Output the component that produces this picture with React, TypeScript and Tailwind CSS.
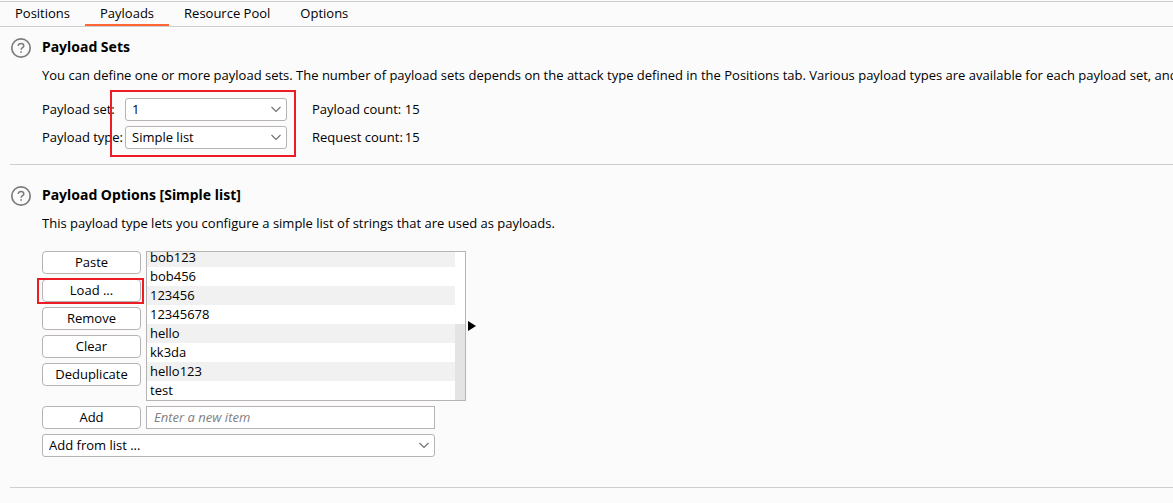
import type { ReactNode, SelectHTMLAttributes } from "react";

const tabs = ["Positions", "Payloads", "Resource Pool", "Options"];
const items = ["bob123", "bob456", "123456", "12345678", "hello", "kk3da", "hello123", "test"];

function HelpIcon() {
  return (
    <svg className="block" width="22" height="22" viewBox="0 0 22 22" fill="none" stroke="#7c7c7c" aria-hidden="true">
      <circle cx="11" cy="11" r="9.2" strokeWidth="1.7" />
      <path d="M8.3 9.1C8.3 7.4 9.4 6.5 11 6.5s2.8.9 2.8 2.4c0 1.7-2.7 1.9-2.7 3.9" strokeWidth="1.5" />
      <path d="M11.1 14.2v1.6" strokeWidth="1.7" />
    </svg>
  );
}

function Section({ title, text, children }: { title: string; text: string; children: ReactNode }) {
  return (
    <section className="ml-[10px] flex border-b border-[#cfcfcf]">
      <button type="button" aria-label={"Help: " + title} className="h-[22px] w-8 shrink-0">
        <HelpIcon />
      </button>
      <div className="min-w-0 flex-1">
        <h2 className="font-['Noto_Sans','Noto_Sans_CJK_SC',sans-serif] text-[14px] leading-5 font-bold whitespace-nowrap">
          {title}
        </h2>
        <p className="mt-2 overflow-hidden leading-5 whitespace-nowrap">{text}</p>
        {children}
      </div>
    </section>
  );
}

function Select({ className, ...rest }: SelectHTMLAttributes<HTMLSelectElement>) {
  return (
    <div className={"relative " + className}>
      <select
        {...rest}
        className="block h-[23px] w-full appearance-none rounded-[3px] border border-[#b7b3b4] bg-white pr-6 pb-px pl-[6px] leading-5"
      />
      <svg className="pointer-events-none absolute top-2 right-[6px]" width="10" height="7" viewBox="0 0 10 7" fill="none" stroke="#6e6e6e" strokeWidth="1.1" aria-hidden="true">
        <path d="M.5 1 5 5.5 9.5 1" />
      </svg>
    </div>
  );
}

function Button({ children }: { children: ReactNode }) {
  return (
    <button type="button" className="block h-[23px] w-[99px] shrink-0 rounded-[4px] border border-[#b7b3b4] bg-white pb-px leading-5">
      {children}
    </button>
  );
}

export default function App() {
  return (
    <div className="min-h-screen overflow-hidden bg-[#fbfbfb] pt-px font-['Open_Sans','Noto_Sans_CJK_SC',sans-serif] text-[13px] text-black">
      <nav className="flex h-[26px] border-y border-[#cfcfcf]">
        {tabs.map((tab) => (
          <a
            key={tab}
            href="#"
            className={
              "h-6 border-b-2 px-[15px] leading-[23px] " + (tab === "Payloads" ? "border-[#ff6633]" : "border-transparent")
            }
          >
            {tab}
          </a>
        ))}
      </nav>

      <main className="pt-[10px]">
        <Section
          title="Payload Sets"
          text="You can define one or more payload sets. The number of payload sets depends on the attack type defined in the Positions tab. Various payload types are available for each payload set, and each payload type can be customized in different ways."
        >
          <div className="relative mt-[13px] mb-[15px] flex gap-[25px]">
            <div className="grid grid-cols-[83px_162px] gap-y-[5px] leading-[23px] whitespace-nowrap">
              <label htmlFor="payload-set">Payload set:</label>
              <Select id="payload-set" defaultValue="1">
                <option>1</option>
              </Select>
              <label htmlFor="payload-type">Payload type:</label>
              <Select id="payload-type" defaultValue="Simple list">
                <option>Simple list</option>
              </Select>
            </div>
            <dl className="grid auto-rows-[23px] grid-cols-[auto_auto] gap-x-[2px] gap-y-[5px] leading-[23px]">
              <dt>Payload count:</dt>
              <dd>15</dd>
              <dt>Request count:</dt>
              <dd>15</dd>
            </dl>
            <div className="pointer-events-none absolute -top-2 left-[68px] h-[67px] w-[186px] border-2 border-[#ed1c24]" />
          </div>
        </Section>

        <div className="pt-5">
          <Section
            title="Payload Options [Simple list]"
            text="This payload type lets you configure a simple list of strings that are used as payloads."
          >
            <div className="mt-[18px] flex gap-[5px]">
              <div className="flex flex-col gap-[5px]">
                <Button>Paste</Button>
                <div className="relative">
                  <Button>Load ...</Button>
                  <div className="pointer-events-none absolute -top-px -left-[5px] h-[26px] w-[107px] border-2 border-[#ed1c24]" />
                </div>
                <Button>Remove</Button>
                <Button>Clear</Button>
                <Button>Deduplicate</Button>
              </div>
              <div className="flex h-[150px] w-[320px] border border-[#b7b3b4] bg-white">
                <ul className="flex flex-1 flex-col justify-end overflow-hidden">
                  {items.map((item) => (
                    <li key={item} className="h-[19px] shrink-0 pl-[3px] leading-[19px] odd:bg-[#f1f1f1]">
                      {item}
                    </li>
                  ))}
                </ul>
                <div className="flex w-[10px] flex-col justify-end">
                  <div className="h-[76px] bg-[#e4e4e4]" />
                </div>
              </div>
              <svg className="-ml-[3px] self-center" width="8" height="10" viewBox="0 0 8 10" aria-hidden="true">
                <path d="M0 0v10l8-5z" />
              </svg>
            </div>
            <div className="mt-[5px] flex gap-[5px]">
              <Button>Add</Button>
              <input
                aria-label="New item"
                placeholder="Enter a new item"
                className="h-[23px] w-[289px] border border-[#b7b3b4] bg-white px-[7px] pb-px placeholder:text-[#808080] placeholder:italic"
              />
            </div>
            <Select className="mt-[5px] mb-[30px] w-[393px]" aria-label="Add from list" defaultValue="Add from list ...">
              <option>Add from list ...</option>
            </Select>
          </Section>
        </div>
      </main>
    </div>
  );
}
